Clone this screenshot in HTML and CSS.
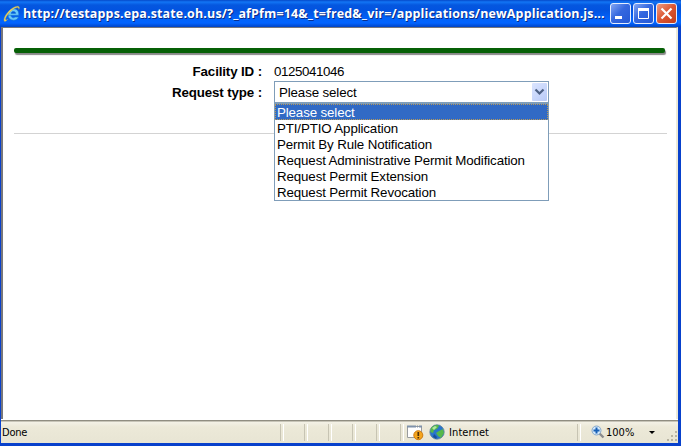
FILE: index.html
```html
<!DOCTYPE html>
<html lang="en">
<head>
<meta charset="utf-8">
<title>New Application</title>
<link rel="stylesheet" href="styles.css">
</head>
<body>
<div class="window">
  <header class="titlebar">
    <svg class="ie" width="18" height="18" viewBox="0 0 18 18">
      <path d="M5 10.3H15.8C16 6 13.9 3.8 10.7 3.8C7.2 3.8 5 6.5 5 9.8C5 13.2 7.4 15.2 10.5 15.2C13.1 15.2 14.9 13.9 15.5 12H12C10.5 13.6 8 12.7 8 10.3M8.1 8.4C8.4 5.9 12.4 5.9 12.7 8.4Z" fill="#69c8fa" stroke="#1976cb" stroke-width=".6"/>
      <path d="M5 14C2.8 17 .6 17.3 1 14.3C1.5 9.4 9.1 1.6 14.2 1.2C16.6 1 16.8 2.6 15.9 4.4C15.9 1.8 13.3 2.2 10 4.5C5.8 7.4 2.1 12.7 2.6 14.6C2.9 15.5 4 15 5 14Z" fill="#f1d35c" stroke="#a9a760" stroke-width=".4"/>
    </svg>
    <span class="title">http://testapps.epa.state.oh.us/?_afPfm=14&amp;_t=fred&amp;_vir=/applications/newApplication.js...</span>
    <div class="controls">
      <span class="control"><svg width="19" height="19"><path d="M4 13.5h7" stroke="#fff" stroke-width="3"/></svg></span>
      <span class="control"><svg width="19" height="19"><path d="M4.500 5v9.500h10V5" fill="none" stroke="#fff"/><path d="M4 5.500h11" stroke="#fff" stroke-width="3"/></svg></span>
      <span class="control close"><svg width="19" height="19"><path d="M4.500 4.500l10 10m0-10l-10 10" stroke="#fff" stroke-width="2.200"/></svg></span>
    </div>
  </header>
  <main class="page">
    <div class="green-bar"></div>
    <div class="form">
      <span class="label">Facility ID :</span><span class="value">0125041046</span>
      <span class="label type">Request type :</span>
      <div class="select">
        <div class="select-box"><span>Please select</span>
          <span class="arrow"><svg width="15" height="18"><path d="M3.500 6.500l4 4 4-4" fill="none" stroke="#4d6185" stroke-width="2.200"/></svg></span>
        </div>
        <ul class="options">
          <li class="selected">Please select</li>
          <li>PTI/PTIO Application</li>
          <li>Permit By Rule Notification</li>
          <li>Request Administrative Permit Modification</li>
          <li>Request Permit Extension</li>
          <li>Request Permit Revocation</li>
        </ul>
      </div>
    </div>
    <div class="rule"></div>
  </main>
  <footer class="status">
    <span class="done">Done</span>
    <span class="pane"></span><span class="pane"></span><span class="pane"></span><span class="pane"></span><span class="pane"></span>
    <span class="pane privacy"><svg width="18" height="17"><path d="M1.500 2.500h14v11h-14z" fill="#fff" stroke="#999b9d"/><path d="M1 2.500h15" stroke="#7f92aa" stroke-width="2" stroke-dasharray="9 1 1 1"/><circle cx="12.300" cy="11.200" r="4.500" fill="#f4a51d" stroke="#ce7b12"/><path d="M12.300 8v4m0 1v1.500" stroke="#50300a" stroke-width="1.700"/></svg></span>
    <span class="pane zone"><svg width="16" height="16"><circle cx="8" cy="8" r="7.200" fill="#2875cb" stroke="#62809b" stroke-width=".8"/><path d="M2 4C5 0 10 .5 10 2L8 5 5 6 4 9 1.200 8zM10 7l4-2 1 4-3 5-3-2-2-3z" fill="#55b84a"/><path d="M3 4l3-2 2 1-3 3z" fill="#b2e6a0"/><path d="M5 10l3 3-1 2-3-2z" fill="#174f9d"/></svg><span class="text">Internet</span></span>
    <span class="pane zoom"><svg width="14" height="14"><path d="M8 8l4.500 4.500" stroke="#8a8b8d" stroke-width="2.400"/><circle cx="5.500" cy="5.500" r="4.500" fill="#d4e9fa" stroke="#85a7ca"/><path d="M5.500 2.500v6m-3-3h6" stroke="#1761b6" stroke-width="2"/></svg><span class="text">100%</span><span class="caret"></span></span>
    <svg class="grip" width="12" height="12"><path d="M9 1h2v2H9zM5 5h2v2H5zM9 5h2v2H9zM1 9h2v2H1zM5 9h2v2H5zM9 9h2v2H9z" fill="#b8b4a2"/></svg>
  </footer>
</div>
</body>
</html>
```

FILE: styles.css
```css
* { box-sizing: border-box; }
body { margin: 0; overflow: hidden; font: 13.33px "Liberation Sans", sans-serif; color: #000; }
svg { display: block; flex: none; }
.window {
  width: 681px; height: 446px; display: flex; flex-direction: column;
  background: #0841cc; padding: 0 3px 3px 1px;
}
.titlebar {
  height: 27px; margin: 0 -3px 0 -1px; padding: 0 4px 0 3px; flex: none;
  display: flex; align-items: center;
  background: linear-gradient(#0549c9 0, #1275f5 2px, #0557df 5px, #0253e0 10px, #0263fa 19px, #0264ff 23px, #0144c6 27px);
}
.title {
  margin-left: 2px; width: 585px; white-space: nowrap; color: #fff;
  font: bold 12.5px "Open Sans", sans-serif; letter-spacing: 0.14px;
  text-shadow: 1px 1px #0a2c87;
}
.controls { display: flex; gap: 2px; margin-left: auto; }
.control {
  width: 21px; height: 21px; border: 1px solid #e4edff; border-radius: 3px;
  background: linear-gradient(135deg, #82a6f3, #3568df 45%, #2459d6);
}
.close { background: linear-gradient(135deg, #ee9c83, #dc5631 50%, #c43e1c); }
.page {
  flex: 1; background: #fff; border: solid #77777b; border-width: 1px 0 0 2px;
  border-right: 2px solid #ece9d8; padding: 20px 9px 0 11px;
}
.green-bar { height: 5px; border-radius: 2px; background: #066006; box-shadow: 1px 2px 1px #888; margin-right: 2px; }
.form {
  display: grid; grid-template-columns: 248px 275px; column-gap: 12px;
  grid-template-rows: 17px 23px; row-gap: 3px; margin-top: 10px; line-height: 17px;
  letter-spacing: -0.13px;
}
.label { font-weight: bold; text-align: right; }
.type { padding-top: 1px; }
.value { letter-spacing: -0.4px; }
.select { position: relative; margin-top: -2px; }
.select-box {
  height: 22px; border: 1px solid #7f9db9; padding: 1px 1px 1px 4px;
  display: flex; align-items: center; justify-content: space-between;
}
.arrow { width: 15px; height: 18px; border-radius: 1px; background: linear-gradient(135deg, #dbe5ff, #b8caf7); }
.options {
  position: absolute; top: 22px; left: 0; width: 275px; margin: 0; padding: 0;
  list-style: none; background: #fff; border: 1px solid #7f9db9; z-index: 1;
}
.options li { height: 16px; line-height: 18px; padding-left: 2px; white-space: nowrap; }
.options .selected { background: #316ac5; color: #fff; outline: 1px dotted #b99a58; outline-offset: -1px; }
.rule { height: 1px; background: #d3d3d3; margin-top: 27px; }
.status {
  height: 24px; flex: none; display: flex; align-items: stretch; color: #000;
  background: linear-gradient(#fff 0, #fff 1px, #848279 1px, #9b9889 2px, #f3f1e6 3px, #ece9d8 8px, #e9e6d5 20px, #e8e5d4 100%);
  font: 11px/28px "DejaVu Sans Condensed", "DejaVu Sans", sans-serif; position: relative;
}
.done { width: 279px; padding-left: 1px; letter-spacing: -0.2px; }
.pane { width: 24px; position: relative; display: flex; align-items: center; }
.pane::before { content: ""; width: 2px; height: 17px; margin-top: 2px; border-left: 1px solid #c7c4b3; border-right: 1px solid #fff; }
.text { margin-top: 4px; }
.privacy svg { margin: 2px 0 0 2px; }
.zone { width: 153px; }
.zone::before { display: none; }
.zone svg { margin: 2px 4px 0 5px; }
.zone .text { letter-spacing: 0.1px; }
.zoom svg { margin: 2px 1px 0 10px; }
.zoom { width: 85px; }
.caret { border: 3px solid transparent; border-top-color: #000; border-bottom: 0; margin: 2px 0 0 15px; }
.grip { position: absolute; right: 0; bottom: 1px; }
```
